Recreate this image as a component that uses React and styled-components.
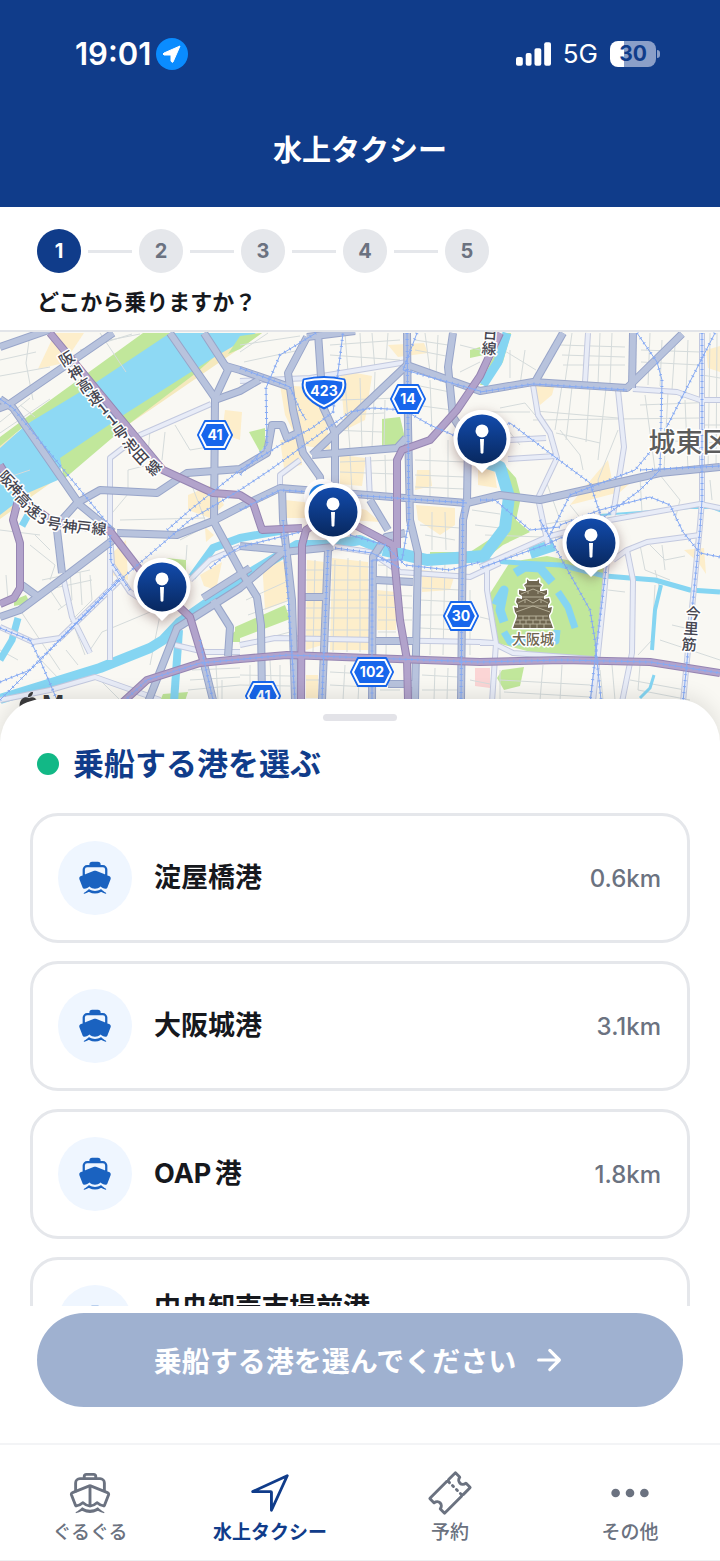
import React, { useState } from 'react';
import styled, { createGlobalStyle } from 'styled-components';
import {
  IoBoat,
  IoBoatOutline,
  IoNavigateOutline,
  IoTicketOutline,
  IoEllipsisHorizontal,
  IoArrowForward,
} from 'react-icons/io5';

const GlobalStyle = createGlobalStyle`
  * {
    box-sizing: border-box;
  }
  body {
    margin: 0;
    background: #ffffff;
    color: #16181d;
    font-family: Inter, 'Noto Sans CJK JP', sans-serif;
  }
  button {
    font-family: inherit;
    border: 0;
    padding: 0;
    cursor: pointer;
  }
`;

const Screen = styled.div`
  height: 100vh;
  display: flex;
  flex-direction: column;
  overflow: hidden;
`;

const Header = styled.header`
  flex-shrink: 0;
  background: #103c8a;
  color: #ffffff;
`;

const StatusBar = styled.div`
  height: 108px;
  padding: 0 60px 0 75px;
  display: flex;
  align-items: center;
  justify-content: space-between;
`;

const StatusGroup = styled.div`
  display: flex;
  align-items: center;
  gap: ${(props) => props.$gap}px;
`;

const Clock = styled.span`
  font-size: 31px;
  font-weight: 600;
  line-height: 36px;
`;

const Network = styled.span`
  font-size: 26px;
  line-height: 32px;
`;

const Battery = styled.span`
  width: 46px;
  height: 26px;
  border-radius: 8px;
  background: linear-gradient(90deg, #ffffff 30%, #8b9fc8 30%);
  color: #103c8a;
  font-size: 21px;
  font-weight: 700;
  line-height: 26px;
  text-align: center;
`;

const BatteryWrap = styled.span`
  display: flex;
  align-items: center;
  gap: 1px;

  &::after {
    content: '';
    width: 3px;
    height: 8px;
    border-radius: 0 3px 3px 0;
    background: #8b9fc8;
  }
`;

const Title = styled.h1`
  margin: 0;
  padding: 23px 0 36px;
  font-size: 29px;
  font-weight: 700;
  line-height: 40px;
  text-align: center;
`;

const StepSection = styled.section`
  flex-shrink: 0;
  padding: 22px 37px 13px;
  border-bottom: 2px solid #e2e4e8;
`;

const Steps = styled.ol`
  margin: 0;
  padding: 0;
  list-style: none;
  display: flex;
  align-items: center;
  gap: 7px;
`;

const Step = styled.li`
  display: flex;
  align-items: center;
  gap: 7px;

  &:not(:last-child)::after {
    content: '';
    width: 44px;
    height: 3px;
    background: #e5e7eb;
  }
`;

const StepNumber = styled.span`
  width: 44px;
  height: 44px;
  border-radius: 50%;
  background: ${(props) => (props.$active ? '#103c8a' : '#e5e7eb')};
  color: ${(props) => (props.$active ? '#ffffff' : '#6b7280')};
  font-size: 20px;
  font-weight: 700;
  line-height: 44px;
  text-align: center;
`;

const Question = styled.p`
  margin: 14px 0 0;
  font-size: 22px;
  font-weight: 700;
  line-height: 30px;
`;

const MapArea = styled.section`
  position: relative;
  flex-shrink: 0;
  aspect-ratio: 720 / 408;
  overflow: hidden;
  background: #f9f8f3;
`;

const MapSvg = styled.svg`
  display: block;
  width: 100%;
  height: 100%;
`;

const PinButton = styled.button`
  position: absolute;
  width: 58px;
  height: 66px;
  background: none;
  transform: translate(-50%, -44%);
  filter: drop-shadow(0 4px 6px rgba(90, 50, 50, 0.4));
`;

const Sheet = styled.main`
  position: relative;
  flex: 1;
  min-height: 0;
  margin-top: -41px;
  padding-top: 15px;
  border-radius: 44px 44px 0 0;
  background: #ffffff;
  box-shadow: 0 -4px 20px rgba(0, 0, 0, 0.1);
  display: flex;
  flex-direction: column;
`;

const Handle = styled.div`
  width: 74px;
  height: 7px;
  margin: 0 auto;
  border-radius: 4px;
  background: #e3e3e8;
  flex-shrink: 0;
`;

const SheetTitle = styled.h2`
  margin: 0;
  padding: 21px 37px 27px;
  display: flex;
  align-items: center;
  gap: 14px;
  color: #103c8a;
  font-size: 31px;
  font-weight: 700;
  line-height: 44px;

  &::before {
    content: '';
    width: 22px;
    height: 22px;
    border-radius: 50%;
    background: #12b886;
  }
`;

const PortList = styled.div`
  flex: 1;
  min-height: 0;
  padding: 0 30px;
  overflow-y: auto;
  scrollbar-width: none;
  display: flex;
  flex-direction: column;
  gap: 18px;
`;

const PortCard = styled.button`
  width: 100%;
  height: 130px;
  flex-shrink: 0;
  padding: 0 26px 0 25px;
  border: 3px solid ${(props) => (props.$selected ? '#103c8a' : '#e5e7eb')};
  border-radius: 28px;
  background: #ffffff;
  color: #16181d;
  display: flex;
  align-items: center;
  gap: 22px;
  text-align: left;
`;

const PortIcon = styled.span`
  width: 74px;
  height: 74px;
  border-radius: 50%;
  background: #eff6ff;
  color: #1a62c0;
  font-size: 36px;
  display: flex;
  align-items: center;
  justify-content: center;
`;

const PortName = styled.span`
  flex: 1;
  min-height: ${(props) => (props.$tall ? 68 : 40)}px;
  font-size: 27px;
  font-weight: 700;
  line-height: 40px;
  text-autospace: normal;
`;

const Distance = styled.span`
  color: #6b7280;
  font-size: 24px;
  font-weight: 500;
`;

const Footer = styled.div`
  flex-shrink: 0;
  padding: 7px 37px 36px;
`;

const SubmitButton = styled.button`
  width: 100%;
  height: 94px;
  border-radius: 47px;
  background: ${(props) => (props.disabled ? '#9fb1d0' : '#103c8a')};
  color: #ffffff;
  font-size: 28px;
  font-weight: 700;
  display: flex;
  align-items: center;
  justify-content: center;
  gap: 16px;

  svg {
    font-size: 34px;
  }
`;

const TabBar = styled.nav`
  position: relative;
  flex-shrink: 0;
  height: 118px;
  border-top: 2px solid #f3f4f6;
  border-bottom: 1px solid #eeeff1;
  background: #ffffff;
  display: flex;
`;

const Tab = styled.a`
  flex: 1;
  padding-top: 25px;
  display: flex;
  flex-direction: column;
  align-items: center;
  gap: 4px;
  color: ${(props) => (props.$active ? '#103c8a' : '#6b7280')};
  font-size: 19px;
  font-weight: ${(props) => (props.$active ? 700 : 500)};
  line-height: 26px;
  text-decoration: none;

  svg {
    font-size: 46px;
  }
`;

// map data, all in the same units as the svg viewBox
const PARKS = [
  'M0 437 L27 417 L78 380 L143 333 L170 333 L95 383 L27 424 L0 446Z',
  'M60 458 L125 414 L213 358 L196 373 L125 427 L64 479Z',
  'M240 336 L262 333 L240 349 L228 354Z',
  'M249 432 L265 428 L265 446 L260 452Z',
  'M382 419 L400 417 L405 438 L398 445 L382 446Z',
  'M235 627 L285 605 L290 619 L235 640Z',
  'M510 562 L547 556 L606 568 L596 658 L550 657 L497 643 L489 595Z',
  'M470 350 L480 347 L484 355 L470 358Z',
  'M500 460 L516 478 L521 497 L516 520 L530 532 L503 545 L484 560 L430 560 L430 552 L470 552 L504 530 L512 500Z',
  'M505 333 L511 333 L503 362 L484 385 L480 385Z',
  'M166 558 L186 560 L186 572 L170 572Z',
  'M14 600 L26 595 L30 603 L14 606Z',
  'M502 670 L524 667 L520 686 L504 690 L497 678Z',
  'M233 633 L240 627 L240 642 L233 642Z',
  'M163 694 L188 692 L185 701 L160 701Z',
];

const COMMERCE = [
  'M55 333 L84 333 L64 363 L38 369Z',
  'M280 385 L322 388 L330 450 L300 445 L285 415Z',
  'M340 370 L372 376 L365 420 L345 430Z',
  'M388 345 L424 343 L428 353 L398 357Z',
  'M188 495 L212 485 L224 505 L210 518 L188 510Z',
  'M225 410 L242 412 L240 440 L222 434Z',
  'M280 440 L300 438 L302 465 L284 468Z',
  'M340 455 L366 458 L362 486 L340 484Z',
  'M285 500 L312 503 L310 518 L285 518Z',
  'M346 505 L366 510 L380 522 L350 520Z',
  'M416 505 L455 508 L455 525 L440 535 L418 520Z',
  'M417 470 L430 470 L432 486 L415 490Z',
  'M307 560 L325 562 L322 645 L306 650Z',
  'M332 558 L368 562 L368 650 L330 650Z',
  'M377 590 L396 592 L396 630 L377 630Z',
  'M422 570 L455 574 L450 590 L422 592Z',
  'M262 560 L288 562 L290 600 L265 610Z',
  'M306 675 L318 675 L318 698 L306 698Z',
  'M110 555 L126 540 L128 580 L112 575Z',
  'M200 575 L222 562 L216 590 L204 586Z',
  'M530 385 L556 380 L552 395 L540 405Z',
  'M595 475 L608 460 L612 480 L636 478 L620 492 L570 505Z',
  'M706 350 L720 346 L720 372 L708 368Z',
  'M684 550 L704 548 L706 574 L698 562Z',
  'M478 470 L494 468 L497 488 L478 485Z',
  'M205 527 L214 535 L206 542Z',
  'M278 560 L290 570 L282 585Z',
];

const MAJOR = [
  'M0 347 L60 326',
  'M-5 410 L8 405 L113 333',
  'M0 399 L13 408 L80 505 L113 532',
  'M170 333 L215 398 L214 522 L240 570 L257 597 L261 625 L262 700',
  'M204 333 L228 370 L215 398',
  'M226 366 L240 370 L290 387',
  'M215 400 L240 391 L259 380',
  'M60 522 L77 503 L100 490 L157 493 L187 473 L240 469 L267 453 L272 425 L282 425 L287 438 L300 432',
  'M117 533 L177 535 L213 521 L240 507 L280 488 L467 503 L500 495 L540 500 L660 473 L720 467',
  'M0 617 L20 610 L67 575 L117 537',
  'M57 530 L62 573',
  'M22 585 L37 596',
  'M148 702 L177 628 L240 588 L283 552 L333 547',
  'M203 598 L250 568',
  'M213 600 L230 627 L228 656',
  'M240 546 L283 550',
  'M307 337 L288 373 L293 410 L303 453 L320 477 L322 500',
  'M318 333 L323 407 L335 433 L335 500',
  'M307 337 L355 331',
  'M407 333 L408 425 L410 520 L418 553 L415 700',
  'M407 365 L312 455',
  'M407 365 L480 391 L533 382 L627 388 L682 334',
  'M535 382 L563 333',
  'M632 388 L633 333',
  'M453 333 L448 367 L453 417 L468 440 L467 502 L463 520 L461 700',
  'M312 455 L397 448 L406 438',
  'M282 488 L283 520 L292 600 L295 700',
  'M328 550 L322 700',
  'M372 700 L373 557 L386 537 L405 533',
  'M370 500 L388 530',
  'M304 597 L325 597',
  'M376 580 L413 582',
  'M376 641 L413 641',
  'M388 684 L415 684',
  'M203 660 L213 700',
];

const HIGHWAY = [
  'M50 333 L163 470 L213 493 L240 495 L253 503 L262 530 L302 528',
  'M301 700 L302 545 L306 530 L315 524 L355 525 L393 545 L400 620 L407 660 L408 700',
  'M0 465 L20 497 L53 522 L110 531 L140 570 L190 617 L203 660',
  'M18 500 L13 520 L20 543 L20 588 L14 598 L0 604',
  'M500 333 L480 376 L457 410 L430 440 L402 450 L397 460 L397 548',
  'M123 702 L147 680 L200 663 L240 659 L287 655 L480 662 L563 660 L650 662 L720 673',
];

const MINOR = [
  'M110 660 L110 458 L140 435 L211 404',
  'M240 381 L310 378 L407 362',
  'M63 577 L72 617 L90 653',
  'M110 533 L112 565 L130 592 L142 600',
  'M190 580 L210 560 L240 547',
  'M0 700 L50 690 L95 677 L160 700',
  'M240 645 L275 638 L480 642 L494 643',
  'M533 385 L538 415 L550 433 L557 458 L538 498 L548 545',
  'M618 390 L624 447 L613 515',
  'M588 333 L585 382',
  'M633 389 L677 392 L700 400 L720 400',
  'M508 459 L556 456',
  'M510 440 L546 438',
  'M702 333 L702 500 L700 525 L683 702',
  'M607 560 L604 595 L593 702',
  'M613 560 L627 550 L647 542 L700 535',
  'M627 550 L633 580 L632 653 L622 702',
  'M480 567 L547 537 L610 520 L700 504 L720 508',
  'M487 570 L487 590 L496 643 L492 702',
  'M497 645 L513 653 L593 659',
  'M480 643 L496 643',
  'M0 627 L33 642 L60 638 L120 580',
  'M280 490 L280 475 L300 460',
  'M368 457 L370 500',
  'M330 546 L370 552 L400 572 L470 577 L500 563',
  'M175 645 L205 652 L240 652',
];

const STREETS = [
  'M30 333 L26 363 L33 400 M0 376 L50 367 M0 360 L36 352 M100 333 L126 372 M80 350 L132 334 M110 340 L140 334',
  'M0 422 L30 398 M0 433 L50 399 M55 372 L110 336 M70 362 L90 385 M20 405 L35 417',
  'M128 470 L128 494 L108 518 M128 470 L160 462 M150 430 L148 455 M175 425 L190 450 L214 446 M165 432 L162 460 M186 470 L205 520 M120 520 L205 518 M0 480 L30 470',
  'M240 345 L300 336 M244 362 L300 350 M240 352 L268 333 M330 345 L400 340 M330 355 L400 360 M345 333 L348 372 M360 333 L362 372 M372 333 L375 370 M388 333 L386 360',
  'M415 340 L448 345 M415 350 L446 356 M425 333 L430 372 M438 335 L436 376 M460 345 L480 350 M460 372 L480 362',
  'M345 380 L350 450 M360 378 L362 448 M375 372 L372 448 M340 400 L400 398 M345 415 L384 413 M330 430 L382 432 M385 400 L384 448 M415 385 L450 392 M415 405 L452 410 M430 380 L432 430',
  'M340 462 L395 460 M340 472 L395 474 M350 455 L352 492 M385 455 L386 494 M415 460 L465 462 M415 475 L465 477 M430 448 L430 498 M448 440 L448 500 M415 487 L465 489',
  'M500 348 L536 370 M510 350 L510 378 M525 350 L520 385 M500 408 L525 403 L535 415 M480 412 L530 412 M500 420 L520 445 M560 345 L625 347 M562 355 L625 357 M563 365 L625 365 M572 333 L565 382 M600 333 L598 384 M612 333 L610 384',
  'M562 385 L555 430 M572 387 L566 440 M590 386 L586 442 M606 388 L598 460 M535 411 L618 418 M533 420 L700 418 M556 433 L600 443 M560 430 L580 455 L583 470 M618 430 L598 480 L600 492',
  'M641 350 L700 352 M641 362 L700 365 M650 333 L648 385 M662 340 L660 386 M675 345 L672 390 M688 340 L686 395 M640 405 L718 402 M645 395 L655 470 M668 392 L664 470 M685 400 L688 470 M650 440 L720 443',
  'M710 333 L708 470 M717 333 L716 470 M702 375 L720 378 M702 425 L720 425 M545 478 L560 520 M540 525 L600 515 M570 505 L590 530 M640 478 L642 512 M660 475 L680 500 L675 520 M710 480 L712 500',
  'M485 535 L570 538 M640 545 L645 570 L670 580 M650 545 L665 560 L685 556 M662 545 L665 570 M608 590 L625 592 M655 585 L652 640 L638 655 M660 640 L720 660 M672 625 L685 628 M655 570 L660 590',
  'M480 617 L492 620 M500 670 L500 700 M543 665 L540 700 M562 665 L560 700 M500 680 L590 685 M504 692 L590 697 M600 670 L603 700 M612 665 L615 700 M630 680 L685 690 M640 665 L638 690 L690 700',
  'M0 530 L40 535 M30 545 L55 565 L50 580 M35 535 L50 550 M6 575 L8 600 M42 580 L90 570 M45 590 L92 580 M70 570 L72 600 L58 610 M80 572 L82 605 M90 575 L92 600 L70 622 M50 590 L62 608 M88 653 L102 632 L150 612 M20 610 L60 670 M70 615 L85 655 M0 650 L18 660 M36 655 L60 680 M66 650 L78 665',
  'M100 680 L120 700 M160 615 L150 665 M187 545 L186 560 M222 680 L222 700 M188 690 L240 685 M192 670 L240 668 M216 665 L218 700 M190 680 L240 677 M225 540 L235 560 M180 540 L205 527',
  'M246 600 L290 580 M248 615 L290 600 M260 640 L290 632 M270 660 L272 700 M280 665 L280 700 M240 675 L290 676 M240 685 L290 686 M250 665 L250 700',
  'M306 570 L325 570 M306 580 L370 580 M306 608 L370 608 M306 618 L370 618 M306 630 L370 630 M315 560 L313 652 M335 560 L333 652 M348 558 L347 652 M360 560 L360 652 M330 590 L370 590 M330 565 L370 567 M330 600 L370 600',
  'M378 565 L396 566 M378 595 L412 596 M378 607 L412 608 M378 620 L412 620 M378 632 L396 632 M387 565 L386 656 M422 575 L460 577 M422 588 L460 590 M420 600 L460 602 M420 615 L445 615 M420 628 L460 630 M432 560 L430 655 M445 560 L443 655 M470 590 L470 655',
  'M306 680 L320 680 M330 672 L368 674 M330 685 L368 687 M345 665 L343 700 M360 665 L358 700 M380 690 L400 690 M422 675 L458 677 M422 690 L458 690 M435 668 L434 700 M448 668 L447 700 M470 680 L490 684',
  'M420 525 L460 528 M425 535 L455 540 M432 512 L432 550 M445 512 L446 550 M472 510 L500 514 M475 525 L500 528',
];

const RAIL = [
  'M0 399 L13 408 L113 530',
  'M0 700 L60 640 L120 580 L190 520 L240 490 L270 470 L350 412 L372 408 L404 410 L430 425 L460 438 L480 437 L510 423 L555 457 L590 483 L602 520',
  'M0 682 L30 670 L120 578',
  'M167 530 L190 510 L240 470 L280 445 L312 428 L333 412 L343 333',
  'M240 368 L290 387 L300 410 L306 420',
  'M240 510 L280 490 L467 503',
  'M407 333 L409 520 L402 560 L372 560 L372 700',
  'M417 333 L403 370 L412 372 L480 391',
  'M316 333 L280 355 L266 388 L267 445 L240 475',
  'M480 392 L533 384 L627 390',
  'M637 333 L657 362 L662 380 L660 470 L640 490 L600 520 L545 545 L480 568',
  'M715 333 L660 440 L635 470 L570 495 L550 535',
  'M702 333 L702 500 L700 530 L683 702',
  'M560 525 L600 510 L650 497 L670 505 L683 532 L700 553 L720 557',
  'M540 520 L562 560 L590 610 L595 640 L601 700',
  'M607 560 L590 702',
  'M480 500 L495 500 L530 530 L560 527',
  'M30 640 L40 660 L57 700',
  'M0 628 L30 640',
  'M283 520 L295 700',
  'M328 550 L322 700',
  'M463 500 L461 700',
  'M123 702 L147 680 L200 663 L287 655 L480 662 L563 660 L650 662 L720 673',
  'M350 535 L385 545 L405 565 L450 570 L480 562',
  'M335 548 L372 553 L400 568',
  'M110 535 L111 562 L130 590',
  'M200 640 L205 665 L213 700',
  'M210 568 L222 558 L240 547 L300 532',
  'M640 470 L720 466',
];

const WATER = [
  ['M507 333 L498 362 L483 385', 9],
  ['M484 462 L500 467 L509 497 L505 528 L484 556 L427 560 L383 550', 12],
  ['M383 550 L360 540 L330 545 L297 545 L247 575 L180 622 L163 640 L150 648 L100 668 L0 699', 10],
  ['M285 530 L240 538 L213 548 L192 577', 8],
  ['M179 630 L174 702', 8],
  ['M18 618 L12 640 L0 660', 7],
  ['M28 515 L22 526', 7],
  ['M480 560 L520 563 L560 565 L605 576 L655 580 L690 590 L720 592', 5],
  ['M530 553 L554 545', 12],
  ['M661 585 L655 610 L652 650', 4],
  ['M654 675 L650 688 L640 698', 3],
  ['M515 573 L525 567 L540 568 L552 582', 9],
  ['M558 592 L568 607 L575 628', 7],
  ['M496 605 L498 600 L504 590 L500 610 L504 622', 9],
  ['M504 632 L510 642 L556 641 L557 630', 7],
  ['M600 515 L640 512 L690 508 L712 508 L722 512', 2],
];

const LABELS = [
  { c: '阪', x: 67, y: 359, r: -32 },
  { c: '神', x: 76, y: 373, r: -32 },
  { c: '高', x: 85, y: 386, r: -32 },
  { c: '速', x: 95, y: 398, r: -32 },
  { c: '1', x: 103, y: 409, r: -38 },
  { c: '1', x: 112, y: 420, r: -38 },
  { c: '号', x: 121, y: 433, r: -34 },
  { c: '池', x: 131, y: 446, r: -38 },
  { c: '田', x: 141, y: 457, r: -42 },
  { c: '線', x: 154, y: 468, r: -48 },
  { c: '阪', x: 6, y: 479, r: 46 },
  { c: '神', x: 15, y: 489, r: 46 },
  { c: '高', x: 23, y: 500, r: 46 },
  { c: '速', x: 33, y: 511, r: 36 },
  { c: '3', x: 42, y: 519, r: 22 },
  { c: '号', x: 54, y: 524, r: 10 },
  { c: '神', x: 70, y: 527, r: 6 },
  { c: '戸', x: 84, y: 528, r: 6 },
  { c: '線', x: 99, y: 529, r: 6 },
  { c: '日', x: 490, y: 334, r: 4 },
  { c: '線', x: 489, y: 349, r: 4 },
  { c: '今', x: 693, y: 614, r: 4 },
  { c: '里', x: 691, y: 629, r: 4 },
  { c: '筋', x: 689, y: 645, r: 4 },
];

const SHIELDS = [
  { no: '41', x: 215, y: 435, w: 17 },
  { no: '14', x: 408, y: 399, w: 17 },
  { no: '30', x: 461, y: 616, w: 17 },
  { no: '102', x: 372, y: 672, w: 21 },
  { no: '41', x: 263, y: 696, w: 17 },
];

const PORTS = [
  { id: 'yodoyabashi', name: '淀屋橋港', distance: '0.6km', x: 333, y: 512 },
  { id: 'osakajo', name: '大阪城港', distance: '3.1km', x: 591, y: 543 },
  { id: 'oap', name: 'OAP港', distance: '1.8km', x: 482, y: 439 },
  { id: 'ichiba', name: '中央卸売市場前港', tall: true, x: 162, y: 587 },
];

const hexagon = (w, h) =>
  `${-w},0 ${-w + h / 2},${-h} ${w - h / 2},${-h} ${w},0 ${w - h / 2},${h} ${-w + h / 2},${h}`;

const Lines = ({ paths, casing, fill, width }) => (
  <g fill="none" strokeLinejoin="round">
    {paths.map((d) => <path key={d} d={d} stroke={casing} strokeWidth={width + 2} />)}
    {paths.map((d) => <path key={`${d}f`} d={d} stroke={fill} strokeWidth={width} />)}
  </g>
);

const RouteShield = ({ no, x, y, w }) => (
  <g transform={`translate(${x} ${y})`}>
    <polygon points={hexagon(w, 14)} fill="#1766ec" stroke="#1766ec" strokeWidth="2" strokeLinejoin="round" />
    <polygon points={hexagon(w - 2, 12)} fill="none" stroke="#ffffff" strokeWidth="2" strokeLinejoin="round" />
    <text y="5" fontSize="14" fontWeight="700" fill="#ffffff" textAnchor="middle">{no}</text>
  </g>
);

const Castle = () => (
  <g transform="translate(533 603)" strokeLinejoin="round">
    <path
      fill="#6f6650"
      stroke="#ffffff"
      strokeWidth="3"
      paintOrder="stroke"
      d="M-6 -24 L-4 -22 H4 L6 -24 L6 -20 L9 -18 L7 -15 V-12 H10 L14 -13 L14 -9 L11 -7 V-4 L16 -5 L17 -1 L15 2 V5 L19 4 L18 9 L16 12 V14 L20 25 H-20 L-16 14 V12 L-18 9 L-19 4 L-15 5 V2 L-17 -1 L-16 -5 L-11 -4 V-7 L-14 -9 L-14 -13 L-10 -12 H-7 V-15 L-9 -18 L-6 -20Z"
    />
    <path
      fill="none"
      stroke="#b5ae97"
      strokeWidth="1"
      d="M-8 -17 H8 M-12 -9 L0 -14 L12 -9 M-11 -6 H11 M-15 0 L-7 -4 L0 0 L7 -4 L15 0 M-14 3 H14 M-17 9 L0 3 L17 9 M-15 13 H15 M-17 17 H17 M-18 21 H18 M-10 13 V17 M-4 13 V17 M3 13 V17 M10 13 V17 M-13 17 V21 M-7 17 V21 M0 17 V21 M7 17 V21 M13 17 V21 M-10 21 V25 M-3 21 V25 M4 21 V25 M11 21 V25 M-5 -12 V-9 M5 -12 V-9 M-8 -3 V0 M8 -3 V0"
    />
  </g>
);

const CityMap = () => (
  <MapSvg viewBox="0 332 720 408" aria-hidden="true">
    <rect y="332" width="720" height="408" fill="#f9f8f3" />
    {COMMERCE.map((d) => <path key={d} d={d} fill="#fdeecb" />)}
    <path d="M475 668 L490 668 L490 688 L475 686Z" fill="#fbd5d5" />
    <path d="M0 444 L170 333 L262 333 L150 410 L60 470 L55 480 L0 519Z" fill="#f5e9bd" />
    <path d="M0 448 L27 424 L78 388 L167 333 L256 333 L213 358 L125 420 L62 463 L58 480 L30 492 L0 515Z" fill="#8ed9f4" />
    {PARKS.map((d) => <path key={d} d={d} fill="#c1e79b" />)}
    <g fill="none" stroke="#d5dbdb" strokeWidth="1">
      {STREETS.map((d) => <path key={d} d={d} />)}
    </g>
    <g fill="none" stroke="#85d5f2" strokeLinejoin="round">
      {WATER.map(([d, width]) => <path key={d} d={d} strokeWidth={width} />)}
    </g>
    <Lines paths={MINOR} casing="#c3c9df" fill="#e8ecf7" width={4} />
    <Lines paths={MAJOR} casing="#98a5c9" fill="#b8c3dd" width={6} />
    <Lines paths={HIGHWAY} casing="#9685b2" fill="#b2a3cb" width={6} />
    <g fill="none" stroke="#86aaf3">
      {RAIL.map((d) => <path key={d} d={d} strokeWidth="1" />)}
      {RAIL.map((d) => <path key={`${d}t`} d={d} strokeWidth="3" strokeDasharray="1 5" />)}
    </g>

    <Castle />
    <g fontFamily="'Noto Sans CJK JP', sans-serif" stroke="#ffffff" strokeWidth="3" paintOrder="stroke" strokeLinejoin="round" textAnchor="middle">
      {LABELS.map((l) => (
        <text key={`${l.x}-${l.y}`} transform={`translate(${l.x} ${l.y}) rotate(${l.r})`} y="5" fontSize="15" fontWeight="500" fill="#454550">
          {l.c}
        </text>
      ))}
      <text x="533" y="644" fontSize="14" fontWeight="500" fill="#6f6650">大阪城</text>
      <text x="689" y="452" fontSize="27" fontWeight="500" fill="#5c5c5c">城東区</text>
    </g>
    {SHIELDS.map((s) => <RouteShield key={`${s.x}`} {...s} />)}
    <g transform="translate(324 392)">
      <path d="M-20 -12 Q0 -17 20 -12 Q25 4 0 16 Q-25 4 -20 -12Z" fill="#1766ec" stroke="#1766ec" strokeWidth="3" strokeLinejoin="round" />
      <path d="M-19 -11 Q0 -15 19 -11 Q22 4 0 14 Q-22 4 -19 -11Z" fill="none" stroke="#ffffff" strokeWidth="2" strokeLinejoin="round" />
      <text y="4" fontSize="14" fontWeight="700" fill="#ffffff" textAnchor="middle">423</text>
    </g>

    {/* current location */}
    <circle cx="322" cy="497" r="18" fill="#ffffff" />
    <circle cx="322" cy="497" r="13" fill="#1a82ee" />

    <g transform="translate(20 694)" fill="#3c3c3e">
      <path d="M9 4 C13 2 16 4 17 7 C12 10 14 16 17 17 C14 24 11 22 9 22 C6 22 3 24 0 15 C-2 7 3 1 9 4Z M8 3 C8 0 10 -2 13 -2 C13 1 11 3 8 3Z" />
      <text x="22" y="19" fontSize="24" fontWeight="600">Maps</text>
    </g>
  </MapSvg>
);

const PinShape = () => (
  <svg width="58" height="66" viewBox="-29 -29 58 66" aria-hidden="true">
    <defs>
      <linearGradient id="pinFill" x1="0" y1="0" x2="0" y2="1">
        <stop offset="0" stopColor="#124bac" />
        <stop offset="1" stopColor="#08285f" />
      </linearGradient>
    </defs>
    <path d="M0 34 L-7 27 A28.5 28.5 0 1 1 7 27Z" fill="#ffffff" />
    <circle r="24.5" fill="url(#pinFill)" />
    <circle cy="-8" r="6.5" fill="#ffffff" />
    <path d="M-2 0 H2 L1.4 14 Q0 15.4 -1.4 14Z" fill="#ffffff" />
  </svg>
);

const TABS = [
  { label: 'ぐるぐる', Icon: IoBoatOutline },
  { label: '水上タクシー', Icon: IoNavigateOutline, active: true },
  { label: '予約', Icon: IoTicketOutline },
  { label: 'その他', Icon: IoEllipsisHorizontal },
];

const App = () => {
  const [port, setPort] = useState(null);

  return (
    <Screen>
      <GlobalStyle />
      <Header>
        <StatusBar>
          <StatusGroup $gap={5}>
            <Clock>19:01</Clock>
            <svg width="32" height="32" viewBox="0 0 32 32" aria-hidden="true">
              <circle cx="16" cy="16" r="16" fill="#0a8cff" />
              <path d="M24 8 L17 24 Q16 25 15 23 L15 17 L8 17 Q6 16 8 15Z" fill="#ffffff" stroke="#ffffff" strokeWidth="1" strokeLinejoin="round" />
            </svg>
          </StatusGroup>
          <StatusGroup $gap={12}>
            <svg width="35" height="24" viewBox="0 0 36 24" fill="#ffffff" aria-hidden="true">
              <rect x="0" y="15" width="7" height="9" rx="2" />
              <rect x="10" y="11" width="6" height="13" rx="2" />
              <rect x="19" y="6" width="7" height="18" rx="2" />
              <rect x="29" y="0" width="7" height="24" rx="2" />
            </svg>
            <Network>5G</Network>
            <BatteryWrap>
              <Battery>30</Battery>
            </BatteryWrap>
          </StatusGroup>
        </StatusBar>
        <Title>水上タクシー</Title>
      </Header>

      <StepSection>
        <Steps>
          {[1, 2, 3, 4, 5].map((n) => (
            <Step key={n}>
              <StepNumber $active={n === 1}>{n}</StepNumber>
            </Step>
          ))}
        </Steps>
        <Question>どこから乗りますか？</Question>
      </StepSection>

      <MapArea>
        <CityMap />
        {PORTS.map((p) => (
          <PinButton
            key={p.id}
            type="button"
            aria-label={p.name}
            onClick={() => setPort(p.id)}
            style={{ left: `${(p.x / 720) * 100}%`, top: `${((p.y - 332) / 408) * 100}%` }}
          >
            <PinShape />
          </PinButton>
        ))}
      </MapArea>

      <Sheet>
        <Handle />
        <SheetTitle>乗船する港を選ぶ</SheetTitle>
        <PortList>
          {PORTS.map((p) => (
            <PortCard key={p.id} type="button" $selected={port === p.id} onClick={() => setPort(p.id)}>
              <PortIcon>
                <IoBoat />
              </PortIcon>
              <PortName $tall={p.tall}>{p.name}</PortName>
              {p.distance && <Distance>{p.distance}</Distance>}
            </PortCard>
          ))}
        </PortList>
        <Footer>
          <SubmitButton type="button" disabled={!port}>
            乗船する港を選んでください
            <IoArrowForward />
          </SubmitButton>
        </Footer>
      </Sheet>

      <TabBar>
        {TABS.map(({ label, Icon, active }) => (
          <Tab key={label} href="#" $active={active}>
            <Icon />
            {label}
          </Tab>
        ))}
      </TabBar>
    </Screen>
  );
};

export default App;
